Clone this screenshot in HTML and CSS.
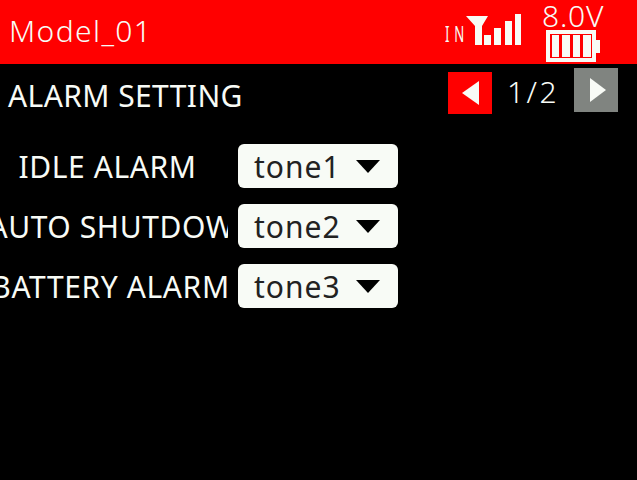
FILE: index.html
```html
<!DOCTYPE html>
<html lang="en">
<head>
    <meta charset="UTF-8">
    <title>Alarm Setting</title>
    <link rel="stylesheet" href="styles.css">
</head>
<body>
    <header class="top-bar">
        <span class="model-name">Model_01</span>
        <div class="status">
            <span class="in-label">IN</span>
            <svg class="signal" width="56" height="31" viewBox="0 0 56 31">
                <path d="M0 2H22L16 12V31H9V12Z" fill="#f8fbf6"/>
                <rect x="18" y="21" width="7" height="10" fill="#f8fbf6"/>
                <rect x="28" y="14" width="7" height="17" fill="#f8fbf6"/>
                <rect x="39" y="7" width="7" height="24" fill="#f8fbf6"/>
                <rect x="49" y="0" width="6" height="31" fill="#f8fbf6"/>
            </svg>
            <div class="power">
                <span class="voltage">8.0V</span>
                <svg class="battery" width="54" height="32" viewBox="0 0 54 32">
                    <path d="M0 0H50V10H54V23H50V32H0ZM4 4V28H46V4Z" fill="#f8fbf6" fill-rule="evenodd"/>
                    <rect x="6" y="5" width="7" height="22" fill="#f8fbf6"/>
                    <rect x="16" y="5" width="8" height="22" fill="#f8fbf6"/>
                    <rect x="27" y="5" width="7" height="22" fill="#f8fbf6"/>
                    <rect x="37" y="5" width="8" height="22" fill="#f8fbf6"/>
                </svg>
            </div>
        </div>
    </header>

    <div class="title-row">
        <span class="page-title">ALARM SETTING</span>
        <div class="pager">
            <span class="page-btn prev"><svg width="18" height="24" viewBox="0 0 18 24"><path d="M18 0V24L1 12Z" fill="#f8fbf6"/></svg></span>
            <span class="page-num">1/2</span>
            <span class="page-btn next"><svg width="16" height="24" viewBox="0 0 16 24"><path d="M0 0V24L16 12Z" fill="#f8fbf6"/></svg></span>
        </div>
    </div>

    <div class="alarm-list">
        <div class="alarm-row">
            <div class="alarm-label idle"><span>IDLE ALARM</span></div>
            <div class="dropdown"><span>tone1</span><i class="caret"></i></div>
        </div>
        <div class="alarm-row">
            <div class="alarm-label shutdown"><span>AUTO SHUTDOWN</span></div>
            <div class="dropdown"><span>tone2</span><i class="caret"></i></div>
        </div>
        <div class="alarm-row">
            <div class="alarm-label battery-alarm"><span>BATTERY ALARM</span></div>
            <div class="dropdown"><span>tone3</span><i class="caret"></i></div>
        </div>
    </div>
</body>
</html>
```

FILE: styles.css
```css
html, body { margin: 0; padding: 0; height: 100%; background-color: #000; overflow: hidden; }
body { font-family: "Noto Sans", sans-serif; color: #f8fbf6; }

.top-bar { display: flex; justify-content: space-between; align-items: flex-start; height: 64px; background-color: #ff0000; padding: 0 32px 0 9px; }
.model-name { font-size: 30px; line-height: 62px; letter-spacing: 1.4px; font-weight: 300; }
.status { display: flex; align-items: flex-start; }
.in-label { display: inline-block; font-size: 22px; line-height: 22px; letter-spacing: 8px; margin-top: 22px; margin-right: -3px; transform: scaleX(0.6); transform-origin: right center; }
.signal { margin-top: 14px; margin-right: 20px; }
.power { display: flex; flex-direction: column; align-items: flex-start; width: 63px; }
.voltage { font-size: 30px; line-height: 30px; letter-spacing: 0.8px; margin-top: 1px; font-weight: 300; }
.battery { margin-top: -1px; margin-left: 4px; }

.title-row { display: flex; justify-content: space-between; align-items: flex-start; height: 64px; padding: 0 19px 0 8px; }
.page-title { font-size: 30px; line-height: 64px; letter-spacing: 0.4px; }
.pager { display: flex; align-items: flex-start; }
.page-btn { display: flex; align-items: center; justify-content: center; width: 44px; height: 42px; }
.page-btn.prev { background-color: #ff0000; margin-top: 8px; }
.page-btn.next { background-color: #808480; margin-top: 4px; height: 44px; padding-left: 4px; box-sizing: border-box; }
.page-num { font-size: 30px; width: 82px; text-align: center; line-height: 56px; letter-spacing: 2.5px; font-weight: 300; }

.alarm-list { display: flex; flex-direction: column; gap: 16px; margin-top: 16px; }
.alarm-row { display: flex; align-items: center; gap: 10px; }
.alarm-label { display: flex; justify-content: center; box-sizing: border-box; width: 228px; overflow: hidden; font-size: 30px; letter-spacing: 0.6px; white-space: nowrap; }
.alarm-label.idle { padding-right: 13px; }
.alarm-label.shutdown { padding-left: 18px; }
.alarm-label.battery-alarm { padding-right: 7px; }
.dropdown { display: flex; align-items: center; justify-content: space-between; box-sizing: border-box; width: 160px; height: 44px; padding: 0 18px 0 16px; background-color: #f8fbf6; border-radius: 6px; color: #222; font-size: 30px; letter-spacing: 1px; }
.caret { width: 0; height: 0; border-left: 12px solid transparent; border-right: 12px solid transparent; border-top: 13px solid #000; }
```
